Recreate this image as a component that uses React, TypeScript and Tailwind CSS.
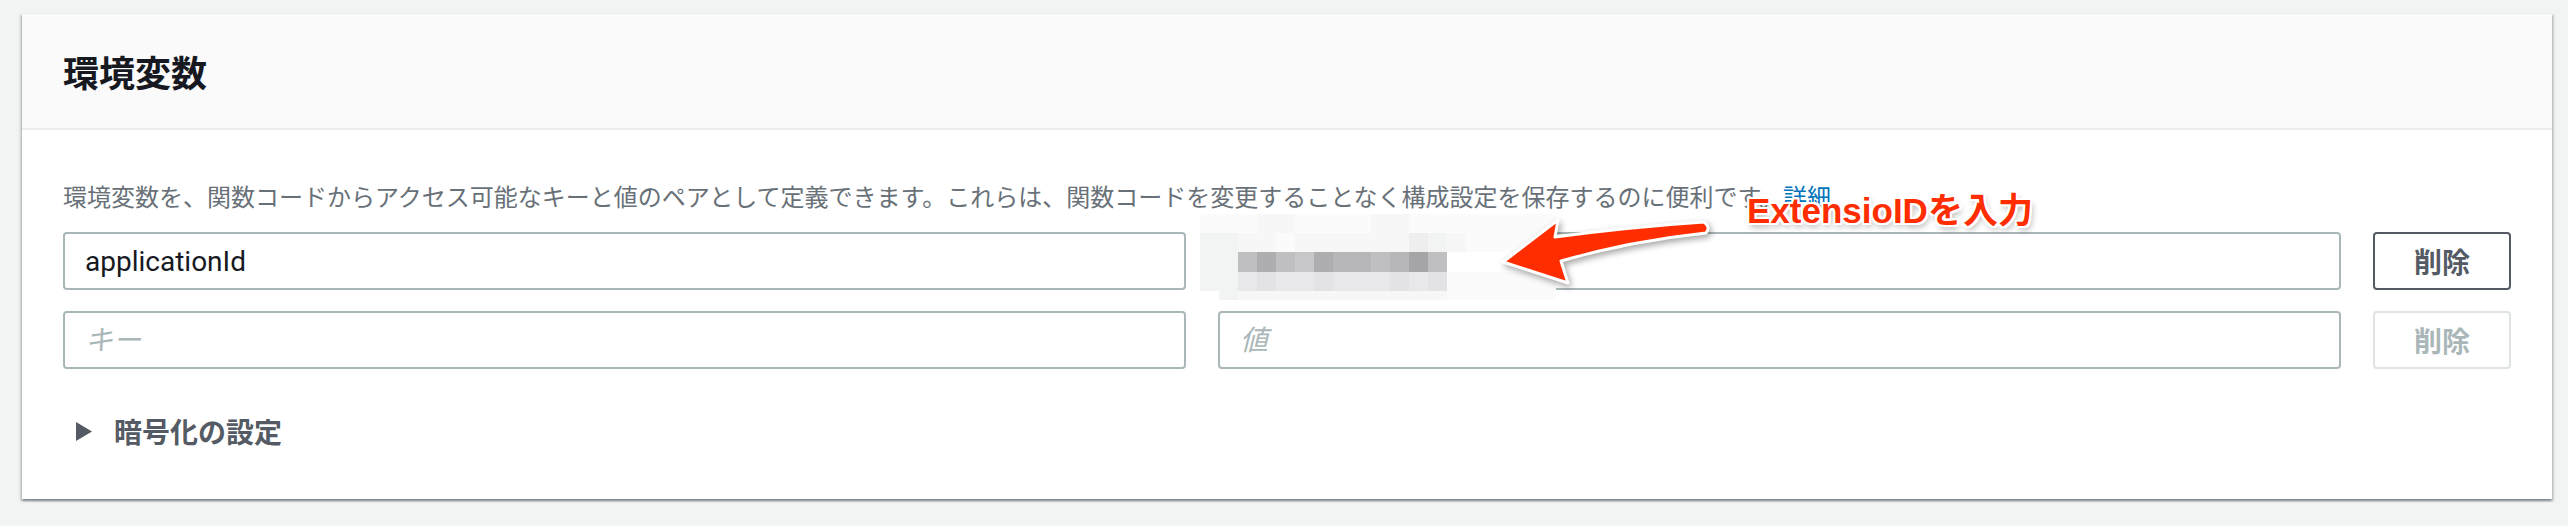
import React from 'react';

// mosaic palette: every class written out so Tailwind picks it up
const mosaicColors: Record<string, string> = {
  t: 'bg-transparent',
  w: 'bg-white',
  a: 'bg-[#fbfbfb]',
  b: 'bg-[#f7f7f8]',
  c: 'bg-[#f2f3f3]',
  d: 'bg-[#eeeeef]',
  e: 'bg-[#e8e8ea]',
  f: 'bg-[#e3e3e5]',
  g: 'bg-[#c7c7c9]',
  h: 'bg-[#bfbfc1]',
  i: 'bg-[#b7b7b9]',
  j: 'bg-[#aeaeb0]',
  k: 'bg-[#a5a5a7]',
};

const mosaicRows: { h: string; cells: string }[] = [
  { h: 'h-[19px]', cells: 'aaabbaaaabbaaaaaaaa' },
  { h: 'h-[19px]', cells: 'ccbbabbbbbbdcbaaaaa' },
  { h: 'h-[20px]', cells: 'cchjhgjiihikhwwwwww' },
  { h: 'h-[19px]', cells: 'ccefeefeeefefaaaaaa' },
  { h: 'h-[9px]', cells: 'tcbbbbbbbbbbbaaaaaa' },
];

function Mosaic() {
  return (
    <div className="absolute left-[1200px] top-[214px] w-[356px] overflow-hidden">
      {mosaicRows.map((row, r) => (
        <div key={r} className={`flex ${row.h}`}>
          {row.cells.split('').map((c, i) => (
            <div key={i} className={`w-[19px] shrink-0 ${mosaicColors[c]}`} />
          ))}
        </div>
      ))}
    </div>
  );
}

function Annotation() {
  return (
    <>
      <svg
        className="absolute left-0 top-0 pointer-events-none [filter:drop-shadow(2px_3px_3px_rgba(0,0,0,0.35))]"
        width="2568"
        height="526"
        viewBox="0 0 2568 526"
      >
        <path
          d="M1503 262 L1558 220 L1555 237 Q1630 227 1704 222 Q1711 227 1706 233 Q1630 241 1561 261 L1568 283 Z"
          fill="#ff2d00"
          stroke="#ffffff"
          strokeWidth="3"
          strokeLinejoin="round"
        />
      </svg>
      <div className="absolute left-[1747px] top-[193px] whitespace-nowrap text-[35px] leading-[35px] font-bold text-[#ff2d00] font-['Liberation_Sans','Noto_Sans_CJK_JP',sans-serif] [text-shadow:2px_0_0_#fff,-2px_0_0_#fff,0_2px_0_#fff,0_-2px_0_#fff,2px_2px_0_#fff,-2px_-2px_0_#fff,2px_-2px_0_#fff,-2px_2px_0_#fff,2px_4px_6px_rgba(0,0,0,0.35)]">
        ExtensioIDを入力
      </div>
    </>
  );
}

export default function App() {
  const inputCls =
    "h-[58px] w-full bg-white border-2 border-[#aab7b8] rounded-[4px] px-[20px] text-[28px] text-[#16191f] outline-none font-['Roboto','Noto_Sans_CJK_JP',sans-serif] placeholder:italic placeholder:text-[#aab7b8]";

  return (
    <div className="relative w-[2568px] h-[526px] overflow-hidden bg-[#f2f3f3] pt-[13px] pl-[22px] pr-[16px] font-['Noto_Sans_CJK_JP',sans-serif]">
      <section className="bg-white border-t border-[#eaeded] shadow-[0_2px_2px_0_rgba(0,28,36,0.3),2px_2px_2px_0_rgba(0,28,36,0.15),-2px_2px_2px_0_rgba(0,28,36,0.15)]">
        {/* Header */}
        <header className="h-[116px] bg-[#fafafa] border-b-2 border-[#eaeded] px-[41px] flex items-center">
          <h2 className="text-[36px] leading-none font-bold text-[#16191f]">環境変数</h2>
        </header>

        {/* Body */}
        <div className="px-[41px] pt-[48px] pb-[48px]">
          <p className="text-[24px] leading-[36px] text-[#687078] whitespace-nowrap">
            環境変数を、関数コードからアクセス可能なキーと値のペアとして定義できます。これらは、関数コードを変更することなく構成設定を保存するのに便利です。
            <a href="#" className="text-[#0073bb]">詳細</a>
          </p>

          <div className="mt-[18px] grid grid-cols-[1fr_1fr_138px] gap-x-[32px] gap-y-[21px]">
            <input className={inputCls} defaultValue="applicationId" readOnly />
            <input className={inputCls} defaultValue="" readOnly />
            <button className="h-[58px] border-2 border-[#545b64] rounded-[4px] bg-white text-[28px] font-bold text-[#545b64]">
              削除
            </button>

            <input className={inputCls} placeholder="キー" readOnly />
            <input className={inputCls} placeholder="値" readOnly />
            <button
              disabled
              className="h-[58px] border-2 border-[#dfe3e3] rounded-[4px] bg-white text-[28px] font-bold text-[#aab7b8]"
            >
              削除
            </button>
          </div>

          {/* Expandable */}
          <div className="mt-[42px] h-[40px] flex items-center">
            <svg className="ml-[13px] shrink-0" width="16" height="19" viewBox="0 0 16 19">
              <path d="M0 0 L16 9.5 L0 19 Z" fill="#545b64" />
            </svg>
            <span className="ml-[22px] text-[28px] leading-[40px] font-bold text-[#545b64]">暗号化の設定</span>
          </div>
        </div>
      </section>

      <Mosaic />
      <Annotation />
    </div>
  );
}
